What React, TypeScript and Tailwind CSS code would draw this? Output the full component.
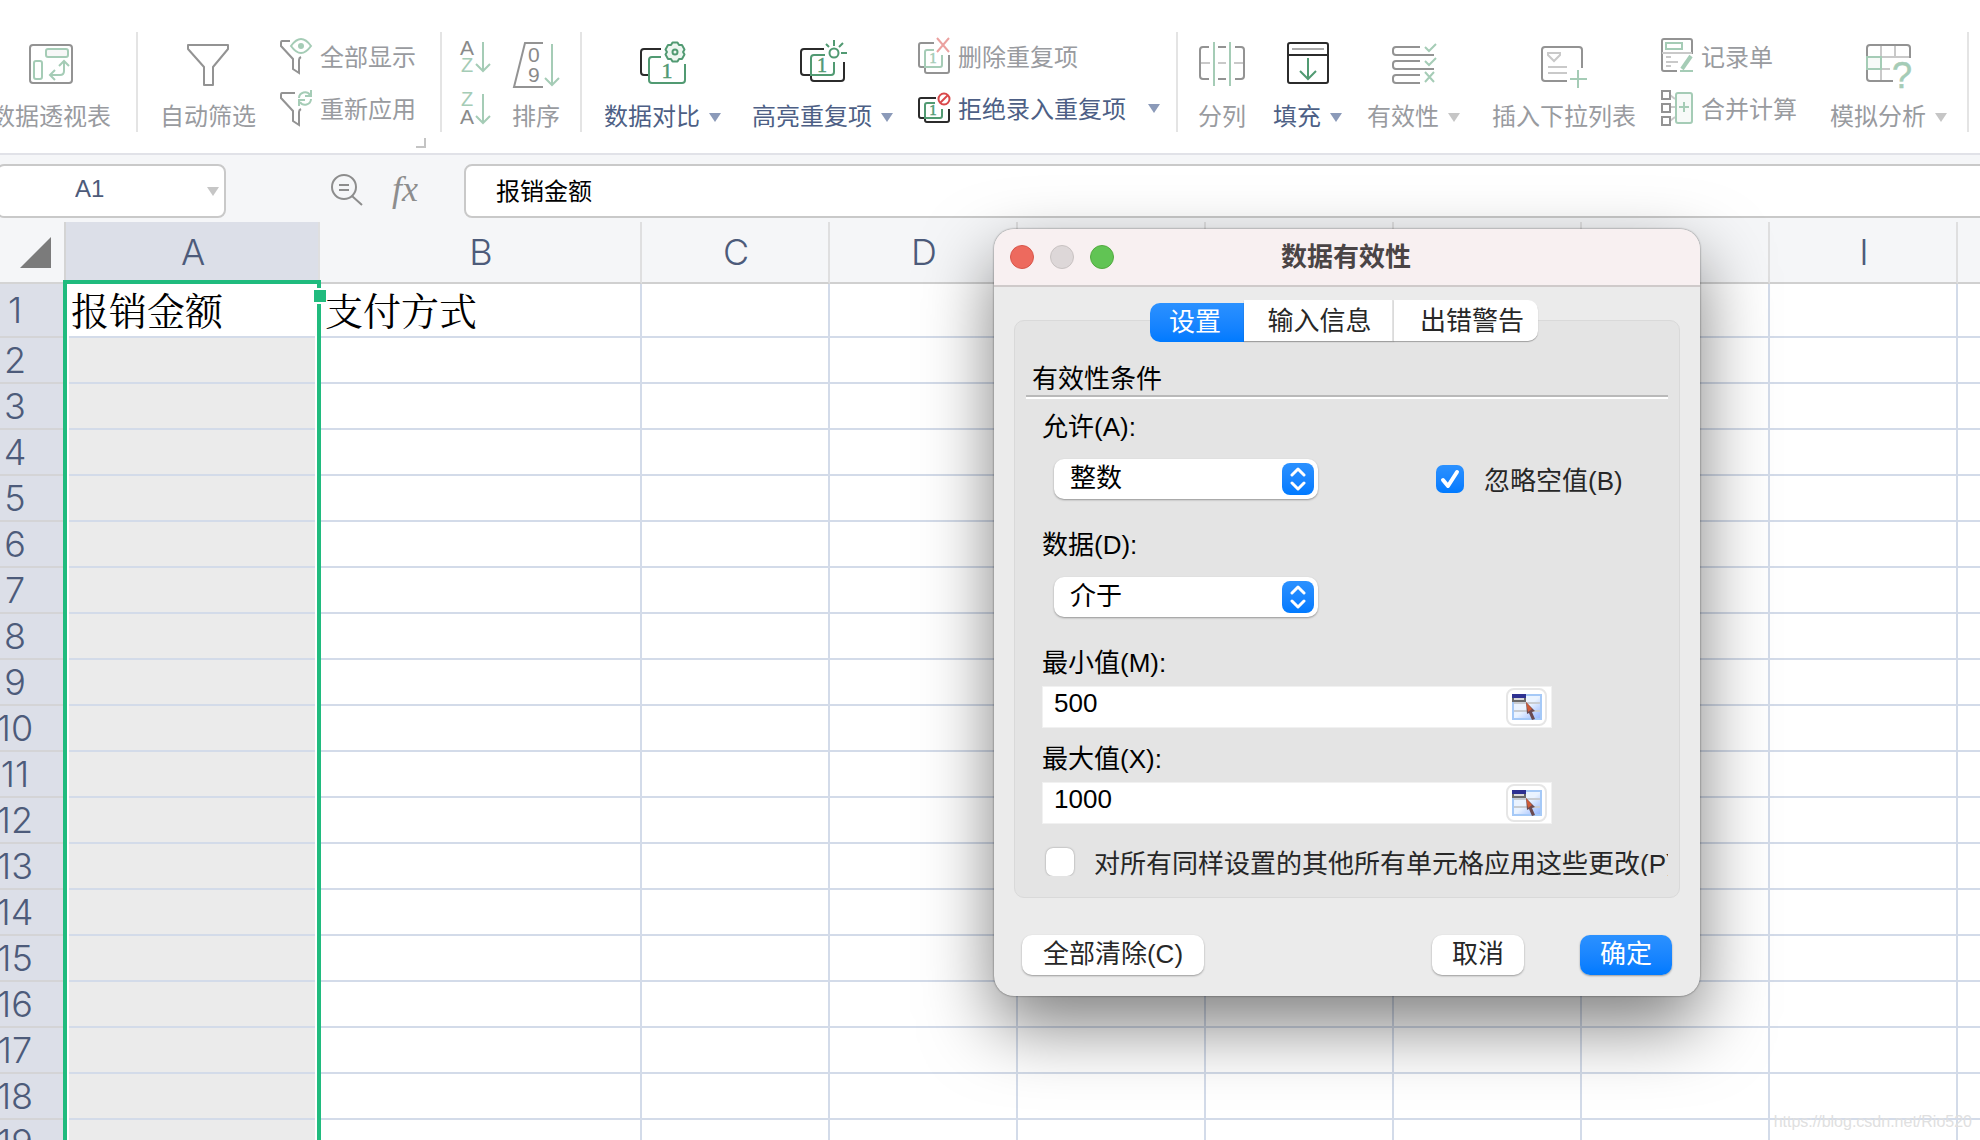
import React from "react"
import { clsx } from "clsx"

const GRAY = "#939393"
const LIGHT = "#c9c9c9"
const MINT = "#a5ccb6"
const GREEN = "#519a72"
const INK = "#2b2b2b"

const sans = "font-['Liberation_Sans','Noto_Sans_CJK_SC',sans-serif]"

type IconProps = { children: React.ReactNode; w?: number; h?: number }

const Icon = ({ children, w = 48, h = 48 }: IconProps) => (
    <svg width={w} height={h} viewBox={`0 0 ${w} ${h}`} fill="none" strokeWidth={2} className="shrink-0 overflow-visible" aria-hidden="true">
        {children}
    </svg>
)

const Glyph = ({ x, y, size, color, children }: { x: number; y: number; size: number; color: string; children: string }) => (
    <text x={x} y={y} fontSize={size} fill={color} fontFamily="Liberation Sans, sans-serif">{children}</text>
)

const One = ({ x, y, size, color }: { x: number; y: number; size: number; color: string }) => (
    <text x={x} y={y} fontSize={size} fill={color} stroke={color} strokeWidth={0.5} textAnchor="middle" fontFamily="Liberation Serif, serif">1</text>
)

// six-toothed gear centred on the origin
const gearPoints = [0, 60, 120, 180, 240, 300]
    .flatMap((deg) => {
        const a = (deg * Math.PI) / 180
        return [[-4, -7], [-2.5, -9.5], [2.5, -9.5], [4, -7]].map(
            ([x, y]) => `${(x * Math.cos(a) - y * Math.sin(a)).toFixed(2)},${(x * Math.sin(a) + y * Math.cos(a)).toFixed(2)}`
        )
    })
    .join(" ")

const PivotIcon = () => (
    <Icon>
        <rect x="3" y="5" width="42" height="38" rx="3" stroke={GRAY} />
        <rect x="19" y="9" width="22" height="8" rx="2" stroke={MINT} fill="#f7f7f7" />
        <rect x="7" y="21" width="8" height="18" rx="2" stroke={MINT} />
        <path d="M37 21V31Q37 35 33 35H23M32 26L37 21L42 26M28 30L23 35L28 40" stroke={MINT} />
    </Icon>
)

const FilterIcon = () => (
    <Icon>
        <path d="M4 5H44V9L29 27V45H20V27L4 9Z" stroke={GRAY} strokeLinejoin="round" />
    </Icon>
)

const ShowAllIcon = () => (
    <Icon w={32} h={36}>
        <path d="M10 3H2Q1 3 1 5V8L13 21V31L19 35V22Q19 20 21 19" stroke={GRAY} />
        <path d="M11 8Q16 1 21 1T31 8Q26 15 21 15T11 8Z" stroke={MINT} />
        <circle cx="21" cy="8" r="3" fill={MINT} />
    </Icon>
)

const ReapplyIcon = () => (
    <Icon w={32} h={36}>
        <path d="M15 3H2Q1 3 1 5V8L13 21V31L19 35V22Q19 20 21 19" stroke={GRAY} />
        <path d="M19 8A6 6 0 0 1 30 5M31 0V6H25M31 9A6 6 0 0 1 20 12M19 16V10H25" stroke={MINT} />
    </Icon>
)

const SortAscIcon = () => (
    <Icon w={30} h={36}>
        <Glyph x={0} y={17} size={21} color="#8a8a8a">A</Glyph>
        <Glyph x={1} y={34} size={20} color={MINT}>Z</Glyph>
        <path d="M23 4V33M16 26L23 33L30 26" stroke={MINT} />
    </Icon>
)

const SortDescIcon = () => (
    <Icon w={30} h={36}>
        <Glyph x={1} y={16} size={20} color={MINT}>Z</Glyph>
        <Glyph x={0} y={34} size={21} color="#8a8a8a">A</Glyph>
        <path d="M23 4V33M16 26L23 33L30 26" stroke={MINT} />
    </Icon>
)

const SortIcon = () => (
    <Icon>
        <path d="M31 3H13L2 47H31" stroke={GRAY} />
        <Glyph x={16} y={22} size={21} color="#8a8a8a">0</Glyph>
        <Glyph x={16} y={42} size={21} color="#8a8a8a">9</Glyph>
        <path d="M40 4V45M33 38L40 45L47 38" stroke={MINT} />
    </Icon>
)

const CompareIcon = () => (
    <Icon>
        <path d="M22 9H5Q2 9 2 12V32Q2 35 5 35H9" stroke={INK} />
        <path d="M22 17H13Q10 17 10 20V40Q10 43 13 43H43Q46 43 46 40V24" stroke={GREEN} />
        <One x={28} y={38} size={22} color={GREEN} />
        <g transform="translate(36 12)" stroke={GREEN}>
            <polygon points={gearPoints} fill="#eef6f1" strokeLinejoin="round" />
            <circle r="2.5" />
        </g>
    </Icon>
)

const HighlightIcon = () => (
    <Icon>
        <path d="M25 9H5Q2 9 2 12V32Q2 35 5 35H12V38Q12 41 15 41H42Q45 41 45 38V22" stroke={INK} />
        <path d="M26 15H15Q12 15 12 18V35H32Q35 35 35 32V22" stroke={GREEN} />
        <One x={23} y={32} size={20} color={GREEN} />
        <circle cx="35" cy="13" r="4.5" stroke={GREEN} />
        <path d="M35 0V6M42 13H48M40 7L44 3M30 7L27 4" stroke={GREEN} />
    </Icon>
)

const RemoveIcon = () => (
    <Icon w={32} h={36}>
        <path d="M16 5H3Q1 5 1 7V27Q1 29 3 29H7V33Q7 35 9 35H29Q31 35 31 33V17" stroke={GRAY} />
        <path d="M16 12H9Q7 12 7 14V29H22Q24 29 24 27V17" stroke={MINT} />
        <One x={15} y={25} size={15} color={MINT} />
        <path d="M19 0L31 14M31 0L19 14" stroke="#eba19f" />
    </Icon>
)

const RejectIcon = () => (
    <Icon w={32} h={36}>
        <path d="M18 8H3Q1 8 1 10V26Q1 28 3 28H7V30Q7 32 9 32H29Q31 32 31 30V19" stroke={INK} />
        <path d="M17 13H9Q7 13 7 15V28H22Q24 28 24 26V19" stroke={GREEN} />
        <One x={15} y={25} size={15} color={GREEN} />
        <circle cx="26" cy="9" r="5.5" stroke="#d9494b" />
        <path d="M22 13L30 5" stroke="#d9494b" />
    </Icon>
)

const SplitIcon = () => (
    <Icon>
        <path d="M11 7H5Q2 7 2 10V36Q2 39 5 39H11M20 7H28M20 39H28M37 7H43Q46 7 46 10V36Q46 39 43 39H37" stroke={GRAY} />
        <path d="M3 23H12M20 23H28M36 23H45" stroke={LIGHT} />
        <path d="M16 2V46M32 2V46" stroke={MINT} />
    </Icon>
)

const FillIcon = () => (
    <Icon>
        <rect x="4" y="3" width="40" height="40" rx="2" stroke={INK} />
        <path d="M4 15H44" stroke={INK} />
        <path d="M8 9H40" stroke="#aaaaaa" />
        <path d="M24 18V39M16 31L24 39L32 31" stroke={GREEN} />
    </Icon>
)

const ValidityIcon = () => (
    <Icon>
        <path d="M30 7H6Q3 7 3 10V12Q3 15 6 15H44M30 21H6Q3 21 3 24V26Q3 29 6 29H44M30 35H6Q3 35 3 38V40Q3 43 6 43H30" stroke={GRAY} />
        <path d="M35 7L39 11L46 4M35 21L39 25L46 18M35 32L44 42M44 32L35 42" stroke={MINT} />
    </Icon>
)

const InsertListIcon = () => (
    <Icon>
        <path d="M42 28V10Q42 7 39 7H5Q2 7 2 10V38Q2 41 5 41H27" stroke={GRAY} />
        <path d="M8 13H20V15L14 21L8 15ZM8 27H27M8 33H27" stroke={LIGHT} />
        <path d="M30 39H47M38 30V48" stroke={MINT} />
    </Icon>
)

const RecordIcon = () => (
    <Icon w={32} h={36}>
        <path d="M16 33H3Q1 33 1 31V3Q1 1 3 1H29Q31 1 31 3V16" stroke={GRAY} />
        <path d="M1 15H31M5 19H10M5 24H17M5 28H10" stroke={LIGHT} />
        <rect x="5" y="5" width="16" height="6" stroke={MINT} />
        <path d="M30 18L21 31" stroke={MINT} strokeWidth="4" />
        <path d="M19 33H32" stroke={MINT} />
    </Icon>
)

const MergeIcon = () => (
    <Icon w={32} h={36}>
        <path d="M9 5L14 9M9 17H14M9 31L14 27" stroke={LIGHT} />
        <path d="M1 1H9V9H1ZM1 14H9V22H1ZM1 27H9V35H1Z" stroke={GRAY} />
        <rect x="15" y="3" width="16" height="30" rx="2" stroke={MINT} fill="#f7faf8" />
        <path d="M23 12V22M18 17H28" stroke={MINT} />
    </Icon>
)

const WhatIfIcon = () => (
    <Icon>
        <path d="M16 5V41M30 5V18M2 17H45M16 29H25" stroke={LIGHT} />
        <path d="M28 41H5Q2 41 2 38V8Q2 5 5 5H42Q45 5 45 8V18" stroke={GRAY} />
        <rect x="2" y="17" width="14" height="12" stroke={MINT} fill="#f7faf8" />
        <text x="27" y="48" fontSize="36" fill={MINT} stroke={MINT} strokeWidth="0.5" fontFamily="Liberation Sans, sans-serif">?</text>
    </Icon>
)

const Caret = ({ muted }: { muted?: boolean }) => (
    <svg width="12" height="9" viewBox="0 0 12 9" className="shrink-0" aria-hidden="true">
        <path d="M0 0H12L6 9Z" fill={muted ? "#c6c6c6" : "#8b9ab9"} />
    </svg>
)

type ToolProps = {
    icon: React.ReactNode
    label: string
    active?: boolean
    caret?: boolean
    className?: string
}

const BigTool = ({ icon, label, active, caret, className }: ToolProps) => (
    <button type="button" className={clsx("flex shrink-0 flex-col items-center gap-[13px] pt-2", active ? "text-[#4d5f85]" : "text-[#999b9f]", className)}>
        {icon}
        <span className="flex items-center gap-[9px] text-2xl leading-8 whitespace-nowrap">
            {label}
            {caret && <Caret muted={!active} />}
        </span>
    </button>
)

const SmallTool = ({ icon, label, active, caret }: ToolProps) => (
    <button type="button" className={clsx("flex h-9 items-center gap-2 text-2xl leading-8 whitespace-nowrap", active ? "text-[#4d5f85]" : "text-[#999b9f]")}>
        {icon}
        <span className="pt-1">{label}</span>
        {caret && <span className="ml-[14px]"><Caret /></span>}
    </button>
)

const SmallTools = ({ children, className }: { children: React.ReactNode; className?: string }) => (
    <div className={clsx("flex shrink-0 flex-col gap-4 pt-[6px]", className)}>{children}</div>
)

const Divider = ({ className }: { className?: string }) => (
    <div className={clsx("h-[100px] w-[2px] shrink-0 bg-[#e4e4e4]", className)} />
)

const Ribbon = () => (
    <header className="relative flex h-[155px] shrink-0 items-start overflow-hidden border-b-2 border-[#e1e2e8] bg-white pt-8">
        <BigTool icon={<PivotIcon />} label="数据透视表" className="-ml-[9px]" />
        <Divider className="ml-[25px]" />
        <BigTool icon={<FilterIcon />} label="自动筛选" className="ml-[22px]" />
        <SmallTools className="ml-6">
            <SmallTool icon={<ShowAllIcon />} label="全部显示" />
            <SmallTool icon={<ReapplyIcon />} label="重新应用" />
        </SmallTools>
        <div className="mt-[106px] -mr-3 h-[10px] w-[10px] border-r-2 border-b-2 border-[#c4c4c4]" />
        <Divider className="ml-[26px]" />
        <SmallTools className="ml-[18px]">
            <button type="button" aria-label="升序"><SortAscIcon /></button>
            <button type="button" aria-label="降序"><SortDescIcon /></button>
        </SmallTools>
        <BigTool icon={<SortIcon />} label="排序" className="ml-[22px]" />
        <Divider className="ml-5" />
        <BigTool icon={<CompareIcon />} label="数据对比" active caret className="ml-[22px]" />
        <BigTool icon={<HighlightIcon />} label="高亮重复项" active caret className="ml-[31px]" />
        <SmallTools className="ml-[25px]">
            <SmallTool icon={<RemoveIcon />} label="删除重复项" />
            <SmallTool icon={<RejectIcon />} label="拒绝录入重复项" active caret />
        </SmallTools>
        <Divider className="ml-4" />
        <BigTool icon={<SplitIcon />} label="分列" className="ml-5" />
        <BigTool icon={<FillIcon />} label="填充" active caret className="ml-[27px]" />
        <BigTool icon={<ValidityIcon />} label="有效性" caret className="ml-[25px]" />
        <BigTool icon={<InsertListIcon />} label="插入下拉列表" className="ml-8" />
        <SmallTools className="ml-[25px]">
            <SmallTool icon={<RecordIcon />} label="记录单" />
            <SmallTool icon={<MergeIcon />} label="合并计算" />
        </SmallTools>
        <BigTool icon={<WhatIfIcon />} label="模拟分析" caret className="ml-[33px]" />
        <Divider className="ml-5" />
    </header>
)

const FormulaBar = () => (
    <div className="flex h-[67px] shrink-0 items-start bg-[#f5f6f8] pt-[9px]">
        <div className="-ml-1 flex h-[54px] w-[230px] shrink-0 items-center rounded-lg border-2 border-[#c9c9c9] bg-white pr-[5px]">
            <input aria-label="名称框" defaultValue="A1" className="min-w-0 flex-1 pb-1 pl-[77px] text-2xl text-[#4d5b7a] outline-none" />
            <Caret muted />
        </div>
        <button type="button" aria-label="搜索" className="mt-[10px] ml-[104px]">
            <Icon w={32} h={32}>
                <circle cx="14" cy="13" r="12" stroke="#8d8d8d" />
                <path d="M9 11H19M9 16H19M22 22L32 31" stroke="#8d8d8d" />
            </Icon>
        </button>
        <button type="button" aria-label="插入函数" className="mt-[5px] ml-[30px] w-[40px] text-left font-['Liberation_Serif',serif] text-4xl leading-10 text-[#8d8d8d] italic">
            fx
        </button>
        <input
            aria-label="编辑栏"
            defaultValue="报销金额"
            className="-mr-3 ml-8 h-[54px] min-w-0 flex-1 rounded-lg border-2 border-[#c9c9c9] bg-white px-[30px] pb-1 text-2xl text-black outline-none"
        />
    </div>
)

const columns = ["A", "B", "C", "D", "E", "F", "G", "H", "I", "J"]
const rows = Array.from({ length: 19 }, (_, i) => i + 1)
const firstRow: Record<string, string> = { A: "报销金额", B: "支付方式" }

const Sheet = () => (
    <main className="relative min-h-0 flex-1 overflow-hidden bg-white">
        <table className="w-[2146px] table-fixed border-separate border-spacing-0">
            <colgroup>
                <col className="w-[66px]" />
                <col className="w-[254px]" />
                <col className="w-[322px]" />
                {columns.slice(2).map((c) => <col key={c} className="w-[188px]" />)}
            </colgroup>
            <thead>
                <tr className="h-[62px] text-4xl leading-none text-[#4d5b7a]">
                    <th className="border-r-2 border-b-2 border-[#d4d4d4] bg-[#f5f6f8] p-0">
                        <svg width="32" height="32" viewBox="0 0 32 32" className="ml-5" role="img" aria-label="全选">
                            <path d="M0 32L31 1V32Z" fill="#7b7b7b" />
                        </svg>
                    </th>
                    {columns.map((c) => (
                        <th key={c} className={clsx("border-r-2 border-b-2 border-r-[#dfdfe0] border-b-[#d0d0d0] p-0 pl-[2px] font-['Inter',sans-serif] font-light", c === "A" ? "bg-[#dcdfe8]" : "bg-[#f5f6f8]")}>
                            {c}
                        </th>
                    ))}
                </tr>
            </thead>
            <tbody>
                {rows.map((r) => (
                    <tr key={r} className={r === 1 ? "h-[54px]" : "h-[46px]"}>
                        <th className="border-b-2 border-[#d4d4d6] bg-[#dcdfe8] p-0 font-['Inter',sans-serif] text-4xl leading-none font-light text-[#4d5b7a]">
                            <span className="-ml-9 flex justify-center">{r}</span>
                        </th>
                        {columns.map((c) => (
                            <td
                                key={c}
                                className={clsx(
                                    "border-r-2 border-b-2 border-[#d3dbe9] p-0 pb-[2px] pl-[5px] font-['Noto_Serif_CJK_SC','Noto_Sans_CJK_SC',serif] text-[38px] leading-10 whitespace-nowrap text-black",
                                    c === "A" && r > 1 && "bg-[#ebebeb]"
                                )}
                            >
                                {r === 1 ? firstRow[c] : null}
                            </td>
                        ))}
                    </tr>
                ))}
            </tbody>
        </table>
        {/* selection frame over column A */}
        <div className="pointer-events-none absolute top-[58px] left-[63px] h-full w-[258px] border-4 border-b-0 border-[#20bb7e]">
            <div className="h-full border-x-2 border-white" />
            <div className="absolute top-[4px] -right-[9px] h-[16px] w-[12px] border-y-2 border-white bg-[#20bb7e]" />
        </div>
    </main>
)

const Select = ({ id, value, options }: { id: string; value: string; options: string[] }) => (
    <div className="relative h-10 w-[264px]">
        <select id={id} defaultValue={value} className="h-full w-full appearance-none rounded-[10px] bg-white pr-12 pb-[2px] pl-4 text-[26px] leading-8 text-black shadow-[0_1px_2px_rgba(0,0,0,0.35)]">
            {options.map((o) => <option key={o}>{o}</option>)}
        </select>
        <span className="pointer-events-none absolute top-1 right-1 flex h-8 w-8 items-center justify-center rounded-lg bg-linear-to-b from-[#2b91ff] to-[#007aff]">
            <svg width="16" height="24" viewBox="0 0 16 24" fill="none" stroke="#fff" strokeWidth="3" strokeLinecap="round" strokeLinejoin="round" aria-hidden="true">
                <path d="M2 8L8 2L14 8M2 16L8 22L14 16" />
            </svg>
        </span>
    </div>
)

const CheckBox = ({ label, checked }: { label: string; checked?: boolean }) => (
    <label className="flex h-7 items-center gap-5 text-[26px] leading-8 whitespace-nowrap text-[#272727]">
        <span className="relative h-7 w-7 shrink-0">
            <input
                type="checkbox"
                defaultChecked={checked}
                className="peer block h-7 w-7 appearance-none rounded-[7px] bg-white shadow-[0_0_2px_rgba(0,0,0,0.4)] checked:bg-linear-to-b checked:from-[#2b91ff] checked:to-[#007aff] checked:shadow-none"
            />
            <svg viewBox="0 0 28 28" fill="none" stroke="#fff" strokeWidth="4" strokeLinecap="round" strokeLinejoin="round" className="pointer-events-none absolute inset-0 hidden peer-checked:block" aria-hidden="true">
                <path d="M7 15L12 21L21 7" />
            </svg>
        </span>
        <span className="pt-[3px]">{label}</span>
    </label>
)

const RangeInput = ({ id, value }: { id: string; value: string }) => (
    <div className="mt-[7px] flex h-[42px] w-[510px] items-center border border-[#f1f1f1] bg-white pr-1">
        <input id={id} defaultValue={value} className="min-w-0 flex-1 pb-2 pl-[11px] text-[26px] leading-8 text-black outline-none" />
        <button type="button" aria-label="选择区域" className="flex h-[38px] w-[41px] items-center justify-center rounded-lg border-2 border-[#e6e6e6] bg-white">
            <svg width="30" height="26" viewBox="0 0 30 26" aria-hidden="true">
                <defs>
                    <linearGradient id={`${id}-sheet`} x1="0" y1="0" x2="1" y2="1">
                        <stop offset="0.5" stopColor="#eaf3ff" />
                        <stop offset="1" stopColor="#8fb2ff" />
                    </linearGradient>
                </defs>
                <rect x="1" y="1" width="28" height="24" fill={`url(#${id}-sheet)`} stroke="#a5c9f7" strokeWidth="2" />
                <path d="M2 9H28M2 17H28" stroke="#c8ccd2" strokeWidth="2" />
                <rect width="14" height="8" fill="#6a6a6a" />
                <rect width="14" height="4" fill="#2e3191" />
                <rect x="2" y="4" width="10" height="2" fill="#d9d9d9" />
                <path d="M14 8L23 17L20 18L23 25L20 26L17 19L15 20Z" fill="#6b4a50" />
                <path d="M14 8L20 15L16 18Z" fill="#cf5c38" />
            </svg>
        </button>
    </div>
)

const FieldLabel = ({ htmlFor, children, className }: { htmlFor: string; children: string; className?: string }) => (
    <label htmlFor={htmlFor} className={clsx("block text-[26px] leading-8 text-black", className)}>{children}</label>
)

const pushButton = "h-10 rounded-[10px] pb-[2px] text-[26px] leading-8 shadow-[0_1px_2px_rgba(0,0,0,0.35)]"

const ValidationDialog = () => (
    <section
        role="dialog"
        aria-label="数据有效性"
        className="absolute top-[229px] left-[994px] w-[706px] rounded-[20px] bg-[#ebebeb] pb-[21px] shadow-[0_0_2px_rgba(0,0,0,0.6),0_30px_70px_rgba(0,0,0,0.5)]"
    >
        <div className="relative flex h-[58px] items-center rounded-t-[20px] border-b-2 border-[#cfcaca] bg-[#f8f0f1] pl-4">
            <div className="flex gap-4">
                <button type="button" aria-label="关闭" className="h-6 w-6 rounded-full border border-[#d85549] bg-[#ed6a5e]" />
                <button type="button" aria-label="最小化" className="h-6 w-6 rounded-full border border-[#c8c2c2] bg-[#ddd7d8]" />
                <button type="button" aria-label="缩放" className="h-6 w-6 rounded-full border border-[#52aa3f] bg-[#61c454]" />
            </div>
            <h2 className="flex-1 pr-[122px] text-center text-[26px] leading-8 font-bold text-[#4a4445]">数据有效性</h2>
        </div>
        <div role="tablist" className="relative z-10 flex items-end justify-center pt-[13px] pr-[6px] text-[26px] leading-8 text-[#272727]">
            <button type="button" role="tab" aria-selected="true" className="h-[39px] w-[94px] rounded-l-[10px] bg-linear-to-b from-[#2b91ff] to-[#007aff] pr-1 pb-[2px] text-white">设置</button>
            <button type="button" role="tab" aria-selected="false" className="mb-[1px] h-[41px] w-[150px] border-r-2 border-[#e2e2e2] bg-white pl-[3px] shadow-[0_1px_1px_rgba(0,0,0,0.3)]">输入信息</button>
            <button type="button" role="tab" aria-selected="false" className="mb-[1px] h-[41px] w-[144px] rounded-r-[10px] bg-white pl-3 shadow-[0_1px_1px_rgba(0,0,0,0.3)]">出错警告</button>
        </div>
        <div className="mx-5 -mt-[22px] rounded-[10px] border border-[#d9d9d9] bg-[#e4e4e4] px-[11px] pt-[42px] pb-[21px]">
            <h3 className="border-b-2 border-[#b9b9b9] px-[6px] text-[26px] leading-8 text-black">有效性条件</h3>
            <div className="h-[2px] bg-white" />
            <div className="overflow-hidden pl-4">
                <FieldLabel htmlFor="allow" className="mt-3">允许(A):</FieldLabel>
                <div className="mt-4 ml-3 flex items-center gap-[118px]">
                    <Select id="allow" value="整数" options={["任何值", "整数", "小数", "序列"]} />
                    <CheckBox label="忽略空值(B)" checked />
                </div>
                <FieldLabel htmlFor="data" className="mt-[30px]">数据(D):</FieldLabel>
                <div className="mt-4 ml-3">
                    <Select id="data" value="介于" options={["介于", "未介于", "等于"]} />
                </div>
                <FieldLabel htmlFor="min" className="mt-[30px]">最小值(M):</FieldLabel>
                <RangeInput id="min" value="500" />
                <FieldLabel htmlFor="max" className="mt-[15px]">最大值(X):</FieldLabel>
                <RangeInput id="max" value="1000" />
                <div className="mt-6 pl-1">
                    <CheckBox label="对所有同样设置的其他所有单元格应用这些更改(P)" />
                </div>
            </div>
        </div>
        <div className="mt-[37px] flex items-center px-7">
            <button type="button" className={clsx(pushButton, "w-[182px] bg-white text-[#272727]")}>全部清除(C)</button>
            <button type="button" className={clsx(pushButton, "ml-auto w-[92px] bg-white text-[#272727]")}>取消</button>
            <button type="button" className={clsx(pushButton, "ml-14 w-[92px] bg-linear-to-b from-[#2b91ff] to-[#007aff] text-white")}>确定</button>
        </div>
    </section>
)

export default function App() {
    return (
        <div className={clsx("relative flex h-screen flex-col overflow-hidden bg-white", sans)}>
            <Ribbon />
            <FormulaBar />
            <Sheet />
            <ValidationDialog />
            <p className="absolute right-2 bottom-2 text-base leading-5 text-[#e0e0e0]">https://blog.csdn.net/Rio520</p>
        </div>
    )
}
